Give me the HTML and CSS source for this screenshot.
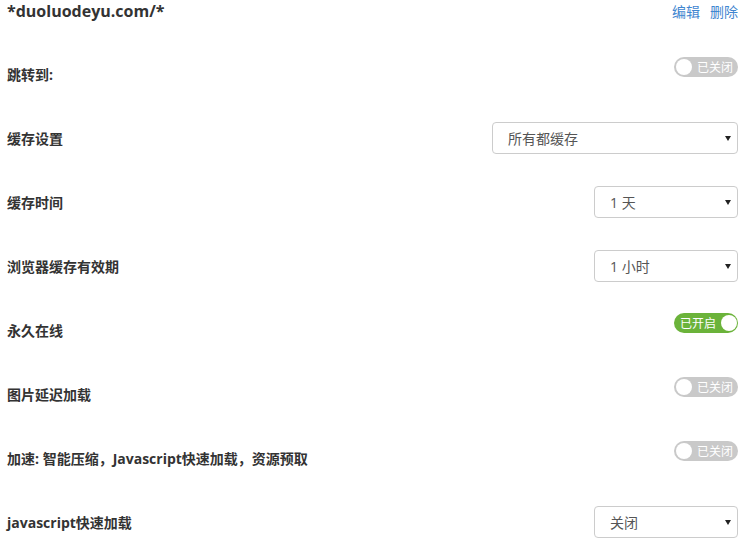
FILE: index.html
```html
<!DOCTYPE html>
<html lang="zh-CN">
<head>
    <meta charset="UTF-8">
    <title>duoluodeyu.com</title>
    <link rel="stylesheet" href="styles.css">
</head>
<body>
    <div class="rule">
        <div class="rule-head">
            <h2>*duoluodeyu.com/*</h2>
            <div class="actions">
                <a href="#">编辑</a>
                <a href="#">删除</a>
            </div>
        </div>

        <div class="row">
            <label>跳转到:</label>
            <span class="switch off"><span class="knob"></span><span class="switch-text">已关闭</span></span>
        </div>

        <div class="row">
            <label>缓存设置</label>
            <div class="select-wrap wide">
                <select>
                    <option>所有都缓存</option>
                </select>
            </div>
        </div>

        <div class="row">
            <label>缓存时间</label>
            <div class="select-wrap">
                <select>
                    <option>1 天</option>
                </select>
            </div>
        </div>

        <div class="row">
            <label>浏览器缓存有效期</label>
            <div class="select-wrap">
                <select>
                    <option>1 小时</option>
                </select>
            </div>
        </div>

        <div class="row">
            <label>永久在线</label>
            <span class="switch on"><span class="switch-text">已开启</span><span class="knob"></span></span>
        </div>

        <div class="row">
            <label>图片延迟加载</label>
            <span class="switch off"><span class="knob"></span><span class="switch-text">已关闭</span></span>
        </div>

        <div class="row">
            <label>加速: 智能压缩，Javascript快速加载，资源预取</label>
            <span class="switch off"><span class="knob"></span><span class="switch-text">已关闭</span></span>
        </div>

        <div class="row">
            <label>javascript快速加载</label>
            <div class="select-wrap">
                <select>
                    <option>关闭</option>
                </select>
            </div>
        </div>
    </div>
</body>
</html>
```

FILE: styles.css
```css
* {
    margin: 0;
    padding: 0;
    box-sizing: border-box;
}

body {
    font-family: "Open Sans", "Noto Sans CJK SC", sans-serif;
    background-color: #fff;
    color: #333;
}

.rule {
    padding: 0 9px 0 7px;
}

.rule-head {
    display: flex;
    justify-content: space-between;
    align-items: center;
    height: 42px;
    padding-bottom: 20px;
}

.rule-head h2 {
    font-size: 16px;
    font-weight: bold;
    color: #333;
}

.actions {
    display: flex;
    gap: 10px;
}

.actions a {
    color: #3f86d0;
    font-size: 14px;
    text-decoration: none;
}

.row {
    display: flex;
    justify-content: space-between;
    align-items: center;
    height: 64px;
}

.row label {
    font-size: 14px;
    font-weight: bold;
    color: #333;
}

.switch {
    display: flex;
    align-items: center;
    gap: 5px;
    flex-shrink: 0;
    width: 64px;
    height: 20px;
    padding: 0 2px;
    border-radius: 10px;
    margin-bottom: 14px;
    color: #fff;
    font-size: 12px;
    white-space: nowrap;
}

.switch.off {
    background-color: #c9c9c9;
}

.switch.on {
    background-color: #6bb33a;
    justify-content: space-between;
    padding-left: 6px;
}

.knob {
    flex-shrink: 0;
    width: 16px;
    height: 16px;
    border-radius: 50%;
    background-color: #fff;
}

.select-wrap {
    position: relative;
    width: 144px;
}

.select-wrap.wide {
    width: 246px;
}

.select-wrap::after {
    content: "";
    position: absolute;
    right: 7px;
    top: 14px;
    border-left: 3.5px solid transparent;
    border-right: 3.5px solid transparent;
    border-top: 5px solid #222;
}

.select-wrap select {
    appearance: none;
    width: 100%;
    height: 32px;
    padding: 0 24px 0 15px;
    border: 1px solid #ccc;
    border-radius: 4px;
    background-color: #fff;
    color: #555;
    font-family: "Open Sans", "Noto Sans CJK SC", sans-serif;
    font-size: 14px;
}
```
